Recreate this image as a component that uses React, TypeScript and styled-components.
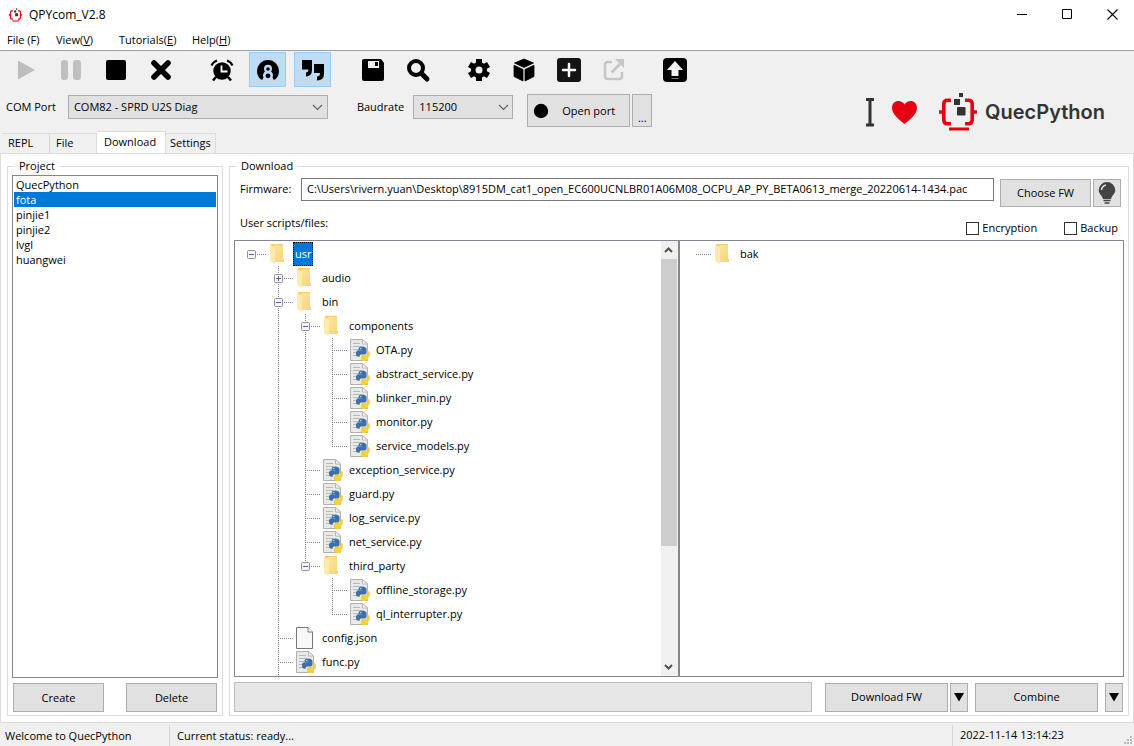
import React, { useState } from 'react';
import styled, { createGlobalStyle, css } from 'styled-components';

const GlobalStyle = createGlobalStyle`
  *, *::before, *::after { box-sizing: border-box; }
  body {
    margin: 0;
    background: #f0f0f0;
    color: #000;
    font: 11px/16px "Open Sans", "Noto Sans", sans-serif;
  }
  button, input, select { font: inherit; color: inherit; margin: 0; border-radius: 0; }
`;

/* ---------- window frame ---------- */

const Window = styled.div`
  display: flex;
  flex-direction: column;
  height: 100vh;
  min-height: 480px;
  overflow: hidden;
`;

const TitleBar = styled.header`
  display: flex;
  align-items: center;
  height: 30px;
  padding-left: 8px;
  background: #fff;
`;

const Title = styled.h1`
  flex: 1;
  margin: 0 0 0 6px;
  font-size: 12px;
  font-weight: 400;
`;

const CaptionButton = styled.button`
  display: grid;
  place-items: center;
  width: 45px;
  height: 30px;
  padding: 0 0 2px 2px;
  border: 0;
  background: none;
`;

const MenuBar = styled.nav`
  display: flex;
  height: 21px;
  padding-left: 7px;
  background: #fff;
  border-bottom: 1px solid #a0a0a0;
  line-height: 20px;
`;

const MenuItem = styled.button<{ $width: number }>`
  width: ${(p) => p.$width}px;
  padding: 0;
  border: 0;
  background: none;
  text-align: left;
  white-space: nowrap;
`;

/* ---------- toolbar ---------- */

const Toolbar = styled.div`
  display: flex;
  height: 37px;
  padding: 1px 0 0 7px;
`;

const ToolButton = styled.button<{ $active?: boolean; $gapAfter?: number }>`
  display: grid;
  place-items: center;
  flex: none;
  width: 37px;
  height: 35px;
  margin-right: ${(p) => p.$gapAfter ?? 8}px;
  padding: 0;
  border: 1px solid ${(p) => (p.$active ? '#99cbf4' : 'transparent')};
  background: ${(p) => (p.$active ? '#c0dcf3' : 'none')};
`;

const PortBar = styled.div`
  display: flex;
  align-items: flex-start;
  height: 43px;
  padding: 6px 29px 0 6px;
`;

const FieldLabel = styled.label`
  flex: none;
  padding-top: 5px;
`;

const SelectBox = styled.span<{ $width: number }>`
  display: grid;
  grid-template-columns: 1fr 18px;
  align-items: center;
  flex: none;
  width: ${(p) => p.$width}px;
  height: 24px;
  margin-top: 1px;
  border: 1px solid #adadad;
  background: #e1e1e1;

  select {
    grid-area: 1 / 1 / 2 / 3;
    height: 22px;
    padding: 0 18px 0 5px;
    border: 0;
    background: none;
    appearance: none;
  }
  svg { grid-area: 1 / 2; justify-self: center; pointer-events: none; }
`;

const Button = styled.button<{ $width: number; $height?: number }>`
  display: flex;
  align-items: center;
  justify-content: center;
  flex: none;
  width: ${(p) => p.$width}px;
  height: ${(p) => p.$height ?? 29}px;
  padding: 0;
  border: 1px solid #adadad;
  background: #e1e1e1;
  white-space: nowrap;
`;

const PortButton = styled(Button)`
  justify-content: flex-start;
  gap: 13px;
  padding-left: 5px;
`;

const MoreButton = styled(Button)`
  align-items: flex-end;
`;

const Slogan = styled.div`
  display: flex;
  align-items: center;
  height: 36px;
  margin-left: auto;
  color: #333;
  font: 600 20px/36px Inter, sans-serif;
`;

/* ---------- tabs ---------- */

const TabList = styled.div`
  display: flex;
  align-items: flex-end;
  height: 22px;
  padding-left: 2px;
`;

const Tab = styled.button<{ $width: number; $active?: boolean }>`
  width: ${(p) => p.$width}px;
  height: 20px;
  padding: 0 0 2px 6px;
  border: 1px solid #dcdcdc;
  border-width: 1px 1px 0 0;
  background: #f0f0f0;
  text-align: left;
  line-height: 16px;
  &:last-child { padding-left: 4px; }
  ${(p) =>
    p.$active &&
    css`
      height: 22px;
      padding-left: 7px;
      background: #fff;
    `}
`;

const TabPage = styled.main`
  display: flex;
  flex: 1;
  gap: 6px;
  min-height: 0;
  padding: 5px 4px 6px 6px;
  border: 1px solid #dcdcdc;
  background: #fff;
`;

const Group = styled.fieldset<{ $width?: number }>`
  display: flex;
  flex-direction: column;
  flex: ${(p) => (p.$width ? `0 0 ${p.$width}px` : '1')};
  min-width: 0;
  min-height: 0;
  margin: 0;
  padding: 0 4px 3px;
  border: 1px solid #dcdcdc;
`;

const Legend = styled.legend`
  margin: 0 0 2px 3px;
  padding: 0 4px;
  line-height: 14px;
`;

/* ---------- project list ---------- */

const ProjectList = styled.ul`
  flex: 1;
  min-height: 0;
  margin: 0 0 5px;
  padding: 1px;
  border: 1px solid #828790;
  list-style: none;
`;

const ProjectItem = styled.li`
  button {
    display: block;
    width: 100%;
    height: 15px;
    padding: 0 2px;
    border: 0;
    background: none;
    line-height: 15px;
    text-align: left;
  }
  button[aria-pressed='true'] { background: #0078d7; color: #fff; }
`;

const ButtonRow = styled.div`
  display: flex;
  justify-content: space-between;
  padding: 0 1px;
`;

/* ---------- download panel ---------- */

const FirmwareRow = styled.div`
  display: flex;
  align-items: flex-start;
  height: 32px;
  padding: 3px 3px 0 6px;

  label { width: 61px; padding-top: 3px; }
  button { margin-top: 1px; }
`;

const FirmwareInput = styled.input`
  flex: 1;
  min-width: 0;
  height: 23px;
  margin: 0 6px 0 0;
  padding: 0 5px 2px;
  border: 1px solid #7a7a7a;
  background: #fff;
`;

const OptionRow = styled.div`
  display: flex;
  align-items: flex-start;
  height: 33px;
  padding: 8px 6px 0;
`;

const OptionTitle = styled.span`
  flex: 1;
`;

const CheckLabel = styled.label`
  display: flex;
  align-items: center;
  margin: 5px 0 0 27px;

  input {
    width: 13px;
    height: 13px;
    margin-right: 3px;
    border: 1px solid #333;
    background: #fff;
    appearance: none;
  }
  input:checked { box-shadow: inset 0 0 0 2px #fff; background: #333; }
`;

const Trees = styled.div`
  display: flex;
  flex: 1;
  min-height: 0;
`;

const TreePane = styled.div`
  display: flex;
  flex: 1 1 0;
  min-width: 0;
  border: 1px solid #828790;
`;

const TreeView = styled.ul`
  flex: 1;
  min-width: 0;
  margin: 0;
  padding: 1px 0 0 3px;
  overflow: hidden;
  list-style: none;
`;

const TreeRow = styled.li`
  display: flex;
  height: 24px;
`;

const dots = 'repeating-linear-gradient(#808080 0 1px, transparent 1px 2px)';
const dotsAcross = 'repeating-linear-gradient(90deg, #808080 0 1px, transparent 1px 2px)';

const Guide = styled.span<{ $line: number }>`
  flex: none;
  width: 27px;
  background: ${dots} 13px 0 / 1px ${(p) => p.$line}px no-repeat;
`;

const Branch = styled.span<{ $line: number }>`
  flex: none;
  width: 31px;
  padding: 8px 0 0 9px;
  background:
    ${dots} 13px 0 / 1px ${(p) => p.$line}px no-repeat,
    ${dotsAcross} 13px 12px / 16px 1px no-repeat;
`;

const Toggle = styled.button`
  display: block;
  width: 9px;
  height: 9px;
  padding: 0;
  border: 0;
  background: #fff;
  svg { display: block; }
`;

const NodeIcon = styled.span`
  flex: none;
  width: 24px;
  svg { display: block; }
`;

const NodeLabel = styled.span<{ $selected?: boolean }>`
  padding: 0 2px;
  line-height: 24px;
  white-space: nowrap;
  ${(p) =>
    p.$selected &&
    css`
      outline: 1px dotted #000;
      outline-offset: -1px;
      background: #0078d7;
      color: #fff;
    `}
`;

const ScrollBar = styled.div`
  display: flex;
  flex-direction: column;
  flex: none;
  width: 17px;
  background: #f0f0f0;
`;

const ScrollButton = styled.button`
  display: grid;
  place-items: center;
  height: 18px;
  padding: 0 2px 0 0;
  border: 0;
  background: #f0f0f0;
`;

const ScrollTrack = styled.div`
  flex: 1;
  padding-right: 1px;
  &::before { content: ''; display: block; height: 72%; background: #cdcdcd; }
`;

const ActionRow = styled.div`
  display: flex;
  align-items: center;
  height: 30px;
  margin-top: 5px;
  padding-right: 1px;
`;

const Progress = styled.div`
  flex: 1;
  height: 30px;
  margin-right: 13px;
  border: 1px solid #bcbcbc;
  background: #e6e6e6;
`;

const Spacer = styled.span<{ $size: number }>`
  flex: 0 0 ${(p) => p.$size}px;
`;

const StatusBar = styled.footer`
  display: flex;
  height: 23px;
  padding-top: 2px;
  line-height: 22px;
`;

const StatusCell = styled.span<{ $width?: number }>`
  flex: ${(p) => (p.$width ? `0 0 ${p.$width}px` : '1')};
  padding-left: 7px;
  border-right: 1px solid #d7d7d7;
  white-space: nowrap;
  &:first-child { padding-left: 5px; }
`;

const GripCell = styled(StatusCell)`
  display: flex;
  justify-content: space-between;
  align-items: flex-end;
  border: 0;
`;

/* ---------- drawings ---------- */

const QuecLogo = ({ width, height }: { width: number; height: number }) => (
  <svg width={width} height={height} viewBox="0 0 40 40" aria-hidden="true">
    <g fill="none" stroke="#e60012" strokeWidth="3.6">
      <path d="M13 8.200H9.500Q5.800 8.200 5.800 12V28Q5.800 31.700 9.500 31.700H13" />
      <path d="M27 8.200H30.500Q34.200 8.200 34.200 12V28Q34.200 31.700 30.500 31.700H27" />
      <path d="M1 20H5M35 20H39" />
      <path d="M11 37H31" strokeWidth="3" />
    </g>
    <g fill="#333">
      <rect x="21" y="1" width="4" height="4" />
      <rect x="16" y="7" width="6" height="6" />
      <rect x="19" y="15" width="8.500" height="8.500" rx=".8" />
    </g>
  </svg>
);

const Chevron = ({ up, bold }: { up?: boolean; bold?: boolean }) => (
  <svg width="11" height="8" viewBox="0 0 11 8" fill="none" stroke={bold ? '#505050' : '#606060'} strokeWidth={bold ? 2 : 1.1} aria-hidden="true">
    <path d={bold ? (up ? 'M2 6l3.500-3.500L9 6' : 'M2 2l3.500 3.500L9 2') : 'M1 2l4.500 4.500L10 2'} />
  </svg>
);

const DownArrow = () => (
  <svg width="10" height="10" viewBox="0 0 10 10" aria-hidden="true">
    <path d="M0 1h10L5 9.500z" />
  </svg>
);

const Folder = () => (
  <svg width="20" height="24" viewBox="0 0 20 24" aria-hidden="true">
    <defs>
      <linearGradient id="fold" x1="0" x2="1" y1="0" y2="1">
        <stop offset="0" stopColor="#fbe5a0" />
        <stop offset="1" stopColor="#f6d475" />
      </linearGradient>
    </defs>
    <path d="M2 2h12v15h1v3H5L2 19z" fill="#f1cd6b" />
    <path d="M1 3l5 2v17l-5-3z" fill="#fdeab0" />
    <path d="M5 3h9v14l1 1v2H6V5z" fill="url(#fold)" />
  </svg>
);

const Page = () => (
  <svg width="20" height="24" viewBox="0 0 20 24" aria-hidden="true">
    <path d="M.5 1.500h11.500l4.500 4.500v16.500H.5z" fill="#f8f8f8" stroke="#777" />
    <path d="M12 1.500V6h4.500" fill="#fff" stroke="#777" />
  </svg>
);

const PythonFile = () => (
  <svg width="20" height="24" viewBox="0 0 20 24" aria-hidden="true">
    <path d="M.5 1.500h12l5 4.500v16.500H.5z" fill="#e9eae8" stroke="#aeb0ae" />
    <path d="M12.500 1.500V6h5z" fill="#fff" stroke="#b4b6b4" />
    <path d="M3 5.500h7M3 8.500h8M3 11.500h5M3 14.500h4M3 17.500h4" stroke="#b5b7b8" />
    <path d="M8.500 11q0-2.500 3.700-2.500T16.500 11v3.500q0 2-2 2H11q-1.500 0-1.500 2.200H8.500Q6 18.700 6 15.500T8.500 12.300h4V12h-4z" fill="#3a70a8" />
    <path d="M17.500 13h.5q2 0 2 3t-2 3.500h-3V21q0 .5 2.500.5-.5 1.500-3 1.500-3.500 0-3.500-2v-2q0-2 1.800-2h3q1.700 0 1.700-2z" fill="#f7cf3c" />
    <path d="M14 19.500h4.500q-.5 3.500-4 3.500z" fill="#f7cf3c" />
    <circle cx="10.800" cy="10.500" r=".7" fill="#dfe9f3" />
  </svg>
);

const ToggleBox = ({ open }: { open: boolean }) => (
  <svg width="9" height="9" viewBox="0 0 9 9" aria-hidden="true">
    <rect x=".5" y=".5" width="8" height="8" rx="1" fill="#f6f6f6" stroke="#919191" />
    <path d={open ? 'M2 4.500h5' : 'M2 4.500h5M4.500 2v5'} stroke="#4b63a7" />
  </svg>
);

const Grip = () => (
  <svg width="10" height="11" viewBox="0 0 10 11" aria-hidden="true">
    <path d="M6 1h2v2H6zM3 4h2v2H3zM6 4h2v2H6zM0 7h2v2H0zM3 7h2v2H3zM6 7h2v2H6z" fill="#b8b8b8" />
  </svg>
);

const Svg = ({ children }: { children: React.ReactNode }) => (
  <svg width="26" height="26" viewBox="0 0 26 26" aria-hidden="true">
    {children}
  </svg>
);

const icons = {
  play: <Svg><path d="M5 3.500v19L22 13z" fill="#bdbdbd" /></Svg>,
  pause: <Svg><path d="M3 6q0-3 3-3h1q3 0 3 3v14q0 3-3 3H6q-3 0-3-3zM15 6q0-3 3-3h2q3 0 3 3v14q0 3-3 3h-2q-3 0-3-3z" fill="#c0c0c0" /></Svg>,
  stop: <Svg><rect x="3" y="3" width="20" height="20" rx="2" /></Svg>,
  clear: <Svg><path d="M6 6l14 14M20 6L6 20" stroke="#000" strokeWidth="5.600" strokeLinecap="round" /></Svg>,
  alarm: (
    <Svg>
      <circle cx="13" cy="14" r="8.700" />
      <path d="M7 20l-3 3.500M19 20l3 3.500" stroke="#000" strokeWidth="2.500" />
      <path d="M2.500 8.500Q4 5 8 3.500M23.500 8.500Q22 5 18 3.500" fill="none" stroke="#000" strokeWidth="2" />
      <path d="M12.500 8.500v6h6" fill="none" stroke="#fff" strokeWidth="1.800" />
    </Svg>
  ),
  timestamp: (
    <Svg>
      <path d="M6 22.500A11 11 0 1 1 20 22.500z" />
      <circle cx="13" cy="11.700" r="4" fill="#c0dcf3" />
      <circle cx="13" cy="18.500" r="5" fill="#c0dcf3" />
      <path d="M8 21h10v3H8z" fill="#c0dcf3" />
      <circle cx="13" cy="12" r="1.800" />
      <circle cx="13" cy="18.800" r="2.400" />
    </Svg>
  ),
  quotes: (
    <Svg>
      <path d="M2 3h10v10q0 6-6 6.500v-4q2.500-.5 2.500-3H2zM14 7h10v10q0 6-7 6.500v-4q3 0 3-3.500h-6z" />
    </Svg>
  ),
  save: (
    <Svg>
      <path d="M4 2h17l3 4v16q0 2-2 2H4q-2 0-2-2V4q0-2 2-2z" />
      <path d="M8 4h11v7H8z" fill="#f0f0f0" />
      <path d="M15 5h3v4h-3z" />
    </Svg>
  ),
  search: (
    <Svg>
      <circle cx="11" cy="11" r="7" fill="none" stroke="#000" strokeWidth="4" />
      <path d="M17 17l5 5" stroke="#000" strokeWidth="5" strokeLinecap="round" />
    </Svg>
  ),
  settings: (
    <Svg>
      <g stroke="#000" strokeWidth="6">
        <path d="M13 2v22M3.500 7.500l19 11M22.500 7.500l-19 11" />
      </g>
      <circle cx="13" cy="13" r="8" />
      <circle cx="13" cy="13" r="3.500" fill="#f0f0f0" />
    </Svg>
  ),
  cube: (
    <Svg>
      <path d="M13 2l9.500 4-9.500 4.500L3.500 6zM3 8.200l9 4.300V24l-9-4.500zM23 8.200l-9 4.300V24l9-4.500z" stroke="#000" strokeWidth=".8" strokeLinejoin="round" />
    </Svg>
  ),
  add: (
    <Svg>
      <rect x="1" y="1" width="24" height="24" rx="3" fill="#141414" />
      <path d="M13 7v12M7 13h12" stroke="#fff" strokeWidth="2.500" strokeLinecap="round" />
    </Svg>
  ),
  open: (
    <Svg>
      <path d="M11 5H7Q4 5 4 8v11q0 3 3 3h11q3 0 3-3v-4" fill="none" stroke="#c6c6c6" strokeWidth="2.600" />
      <path d="M10.500 15.500L19 7" stroke="#c6c6c6" strokeWidth="3" />
      <path d="M14 2h9v9z" fill="#c6c6c6" />
    </Svg>
  ),
  upload: (
    <Svg>
      <rect x="1" y="1" width="24" height="24" rx="4" />
      <path d="M13 4l8 9h-4.500v6h-7v-6H5z" fill="#f4f4f4" />
      <path d="M9.500 21.500h7" stroke="#777" />
    </Svg>
  ),
};

const tools: { icon: keyof typeof icons; label: string; active?: boolean; gapAfter?: number }[] = [
  { icon: 'play', label: 'Run' },
  { icon: 'pause', label: 'Pause' },
  { icon: 'stop', label: 'Stop' },
  { icon: 'clear', label: 'Clear', gapAfter: 24 },
  { icon: 'alarm', label: 'Timer', gapAfter: 9 },
  { icon: 'timestamp', label: 'Auto scroll', active: true },
  { icon: 'quotes', label: 'Quotes', active: true, gapAfter: 23 },
  { icon: 'save', label: 'Save' },
  { icon: 'search', label: 'Search', gapAfter: 24 },
  { icon: 'settings', label: 'Options' },
  { icon: 'cube', label: 'Packages' },
  { icon: 'add', label: 'Add' },
  { icon: 'open', label: 'Open external', gapAfter: 24 },
  { icon: 'upload', label: 'Upload' },
];

/* ---------- data ---------- */

const projects = ['QuecPython', 'fota', 'pinjie1', 'pinjie2', 'lvgl', 'huangwei'];

type Node = { name: string; kind: 'folder' | 'py' | 'file'; open?: boolean; children?: Node[]; more?: boolean };

const py = (name: string): Node => ({ name, kind: 'py' });

const userTree: Node = {
  name: 'usr',
  kind: 'folder',
  open: true,
  children: [
    { name: 'audio', kind: 'folder', open: false },
    {
      name: 'bin',
      kind: 'folder',
      open: true,
      children: [
        {
          name: 'components',
          kind: 'folder',
          open: true,
          children: ['OTA.py', 'abstract_service.py', 'blinker_min.py', 'monitor.py', 'service_models.py'].map(py),
        },
        ...['exception_service.py', 'guard.py', 'log_service.py', 'net_service.py'].map(py),
        { name: 'third_party', kind: 'folder', open: true, children: ['offline_storage.py', 'ql_interrupter.py'].map(py) },
      ],
    },
    { name: 'config.json', kind: 'file' },
    { ...py('func.py'), more: true },
  ],
};

const nodeIcons = { folder: <Folder />, py: <PythonFile />, file: <Page /> };

type RowProps = { node: Node; guides?: number[]; line?: number; selected?: boolean };

const TreeNode = ({ node, guides = [], line = 0, selected }: RowProps) => {
  const [open, setOpen] = useState(Boolean(node.open));
  const below = [...guides, line === 24 ? 24 : 0];
  return (
    <>
      <TreeRow>
        {guides.map((g, i) => (
          <Guide key={i} $line={g} />
        ))}
        <Branch $line={line}>
          {node.open !== undefined && (
            <Toggle aria-label={`Toggle ${node.name}`} onClick={() => setOpen(!open)}>
              <ToggleBox open={open} />
            </Toggle>
          )}
        </Branch>
        <NodeIcon>{nodeIcons[node.kind]}</NodeIcon>
        <NodeLabel $selected={selected}>{node.name}</NodeLabel>
      </TreeRow>
      {open &&
        node.children?.map((child, i, all) => (
          <TreeNode key={child.name} node={child} guides={below} line={i < all.length - 1 || child.more ? 24 : 13} />
        ))}
      {node.more && (
        <TreeRow>
          {guides.map((g, i) => (
            <Guide key={i} $line={g} />
          ))}
          <Guide $line={line} />
        </TreeRow>
      )}
    </>
  );
};

export default function App() {
  const [project, setProject] = useState('fota');

  return (
    <Window>
      <GlobalStyle />
      <TitleBar>
        <QuecLogo width={15} height={14} />
        <Title>QPYcom_V2.8</Title>
        <CaptionButton aria-label="Minimize">
          <svg width="11" height="11"><path d="M0 5.500h10" stroke="#000" /></svg>
        </CaptionButton>
        <CaptionButton aria-label="Maximize">
          <svg width="11" height="11"><path d="M.5.5h9v9h-9z" fill="none" stroke="#000" /></svg>
        </CaptionButton>
        <CaptionButton aria-label="Close">
          <svg width="11" height="11"><path d="M.5.5l10 10M10.500.5l-10 10" stroke="#000" strokeWidth="1.100" /></svg>
        </CaptionButton>
      </TitleBar>
      <MenuBar>
        <MenuItem $width={49}>File (F)</MenuItem>
        <MenuItem $width={63}>View(<u>V</u>)</MenuItem>
        <MenuItem $width={73}>Tutorials(<u>E</u>)</MenuItem>
        <MenuItem $width={60}>Help(<u>H</u>)</MenuItem>
      </MenuBar>

      <Toolbar role="toolbar">
        {tools.map((t) => (
          <ToolButton key={t.icon} aria-label={t.label} $active={t.active} $gapAfter={t.gapAfter}>
            {icons[t.icon]}
          </ToolButton>
        ))}
      </Toolbar>

      <PortBar>
        <FieldLabel htmlFor="port">COM Port</FieldLabel>
        <Spacer $size={12} />
        <SelectBox $width={260}>
          <select id="port"><option>COM82 - SPRD U2S Diag</option></select>
          <Chevron />
        </SelectBox>
        <Spacer $size={29} />
        <FieldLabel htmlFor="baud">Baudrate</FieldLabel>
        <Spacer $size={9} />
        <SelectBox $width={100}>
          <select id="baud"><option>115200</option></select>
          <Chevron />
        </SelectBox>
        <Spacer $size={14} />
        <PortButton $width={103} $height={33}>
          <svg width="16" height="16" aria-hidden="true"><circle cx="8" cy="8" r="7.200" /></svg>
          Open port
        </PortButton>
        <Spacer $size={2} />
        <MoreButton $width={20} $height={33} aria-label="More port options">...</MoreButton>
        <Slogan>
          <svg width="10" height="30" viewBox="0 0 10 30" aria-hidden="true">
            <path d="M1 2.500h8M5 2.500v26M1 28h8" fill="none" stroke="#333" strokeWidth="3" />
          </svg>
          <Spacer $size={17} />
          <svg width="25" height="23" viewBox="0 0 25 23" aria-hidden="true">
            <path d="M12.500 23C9 20 0 14 0 7 0 2.500 3 0 6.500 0c2.500 0 4.800 1.500 6 3.500C13.700 1.500 16 0 18.500 0 22 0 25 2.500 25 7c0 7-9 13-12.500 16z" fill="#e60012" />
          </svg>
          <Spacer $size={21} />
          <QuecLogo width={40} height={40} />
          <Spacer $size={7} />
          QuecPython
        </Slogan>
      </PortBar>

      <TabList role="tablist">
        <Tab role="tab" $width={48}>REPL</Tab>
        <Tab role="tab" $width={47}>File</Tab>
        <Tab role="tab" $width={69} $active aria-selected="true">Download</Tab>
        <Tab role="tab" $width={50}>Settings</Tab>
      </TabList>

      <TabPage>
        <Group $width={216}>
          <Legend>Project</Legend>
          <ProjectList>
            {projects.map((name) => (
              <ProjectItem key={name}>
                <button aria-pressed={name === project} onClick={() => setProject(name)}>{name}</button>
              </ProjectItem>
            ))}
          </ProjectList>
          <ButtonRow>
            <Button $width={91}>Create</Button>
            <Button $width={91}>Delete</Button>
          </ButtonRow>
        </Group>

        <Group>
          <Legend>Download</Legend>
          <FirmwareRow>
            <label htmlFor="firmware">Firmware:</label>
            <FirmwareInput
              id="firmware"
              defaultValue="C:\Users\rivern.yuan\Desktop\8915DM_cat1_open_EC600UCNLBR01A06M08_OCPU_AP_PY_BETA0613_merge_20220614-1434.pac"
            />
            <Button $width={91} $height={28}>Choose FW</Button>
            <Spacer $size={2} />
            <Button $width={28} $height={28} aria-label="Hint">
              <svg width="18" height="24" viewBox="0 0 18 24" aria-hidden="true">
                <path d="M9 1a8.300 8.300 0 0 1 8.300 8.300c0 3.500-3.300 5.200-4.300 8.700H5C4 14.500.7 12.800.7 9.300A8.300 8.300 0 0 1 9 1z" fill="#444" />
                <path d="M3.500 9Q4 5 8 4" fill="none" stroke="#e1e1e1" strokeWidth="1.500" />
                <path d="M5.500 19.500h7M6.500 22h5" stroke="#444" strokeWidth="1.400" />
              </svg>
            </Button>
          </FirmwareRow>
          <OptionRow>
            <OptionTitle>User scripts/files:</OptionTitle>
            <CheckLabel><input type="checkbox" />Encryption</CheckLabel>
            <CheckLabel><input type="checkbox" />Backup</CheckLabel>
          </OptionRow>
          <Trees>
            <TreePane>
              <TreeView>
                <TreeNode node={userTree} selected />
              </TreeView>
              <ScrollBar>
                <ScrollButton aria-label="Scroll up"><Chevron up bold /></ScrollButton>
                <ScrollTrack />
                <ScrollButton aria-label="Scroll down"><Chevron bold /></ScrollButton>
              </ScrollBar>
            </TreePane>
            <TreePane>
              <TreeView>
                <TreeNode node={{ name: 'bak', kind: 'folder' }} />
              </TreeView>
            </TreePane>
          </Trees>
          <ActionRow>
            <Progress role="progressbar" aria-label="Download progress" />
            <Button $width={123}>Download FW</Button>
            <Spacer $size={2} />
            <Button $width={18} aria-label="Download options"><DownArrow /></Button>
            <Spacer $size={7} />
            <Button $width={123}>Combine</Button>
            <Spacer $size={7} />
            <Button $width={18} aria-label="Combine options"><DownArrow /></Button>
          </ActionRow>
        </Group>
      </TabPage>

      <StatusBar>
        <StatusCell $width={170}>Welcome to QuecPython</StatusCell>
        <StatusCell>Current status: ready...</StatusCell>
        <GripCell $width={181}>
          2022-11-14 13:14:23
          <Grip />
        </GripCell>
      </StatusBar>
    </Window>
  );
}
